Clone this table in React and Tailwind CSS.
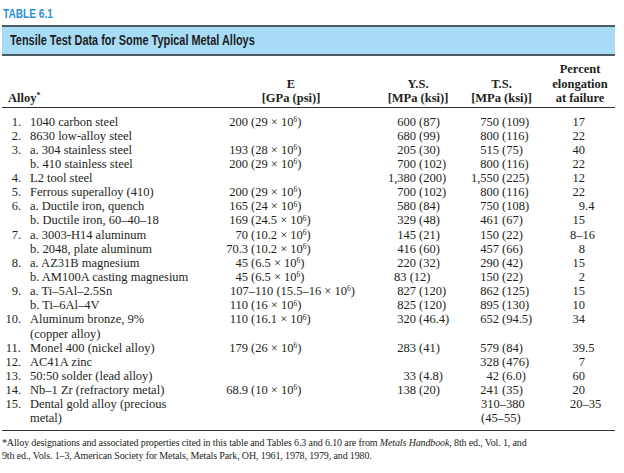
const rows = [
  { n: "1.", a: ["1040 carbon steel"], e: ["200", "(29 × ", "6", ")"], ys: ["600", "(87)"], ts: ["750", "(109)"], p: ["17"] },
  { n: "2.", a: ["8630 low-alloy steel"], ys: ["680", "(99)"], ts: ["800", "(116)"], p: ["22"] },
  { n: "3.", a: ["a. 304 stainless steel"], e: ["193", "(28 × ", "6", ")"], ys: ["205", "(30)"], ts: ["515", "(75)"], p: ["40"] },
  { n: "", a: ["b. 410 stainless steel"], e: ["200", "(29 × ", "6", ")"], ys: ["700", "(102)"], ts: ["800", "(116)"], p: ["22"] },
  { n: "4.", a: ["L2 tool steel"], ys: ["1,380", "(200)"], ts: ["1,550", "(225)"], p: ["12"] },
  { n: "5.", a: ["Ferrous superalloy (410)"], e: ["200", "(29 × ", "6", ")"], ys: ["700", "(102)"], ts: ["800", "(116)"], p: ["22"] },
  { n: "6.", a: ["a. Ductile iron, quench"], e: ["165", "(24 × ", "6", ")"], ys: ["580", "(84)"], ts: ["750", "(108)"], p: ["9", ".4"] },
  { n: "", a: ["b. Ductile iron, 60–40–18"], e: ["169", "(24.5 × ", "6", ")"], ys: ["329", "(48)"], ts: ["461", "(67)"], p: ["15"] },
  { n: "7.", a: ["a. 3003-H14 aluminum"], e: ["70", "(10.2 × ", "6", ")"], ys: ["145", "(21)"], ts: ["150", "(22)"], range: "8–16" },
  { n: "", a: ["b. 2048, plate aluminum"], e: ["70.3", "(10.2 × ", "6", ")"], ys: ["416", "(60)"], ts: ["457", "(66)"], p: ["8"] },
  { n: "8.", a: ["a. AZ31B magnesium"], e: ["45", "(6.5 × ", "6", ")"], ys: ["220", "(32)"], ts: ["290", "(42)"], p: ["15"] },
  { n: "", a: ["b. AM100A casting magnesium"], e: ["45", "(6.5 × ", "6", ")"], ysLeft: "83 (12)", ts: ["150", "(22)"], p: ["2"] },
  { n: "9.", a: ["a. Ti–5Al–2.5Sn"], eLeft: true, e: ["107–110", "(15.5–16 × ", "6", ")"], ys: ["827", "(120)"], ts: ["862", "(125)"], p: ["15"] },
  { n: "", a: ["b. Ti–6Al–4V"], e: ["110", "(16 × ", "6", ")"], ys: ["825", "(120)"], ts: ["895", "(130)"], p: ["10"] },
  { n: "10.", a: ["Aluminum bronze, 9%", "(copper alloy)"], e: ["110", "(16.1 × ", "6", ")"], ys: ["320", "(46.4)"], ts: ["652", "(94.5)"], p: ["34"] },
  { n: "11.", a: ["Monel 400 (nickel alloy)"], e: ["179", "(26 × ", "6", ")"], ys: ["283", "(41)"], ts: ["579", "(84)"], p: ["39", ".5"] },
  { n: "12.", a: ["AC41A zinc"], ts: ["328", "(476)"], p: ["7"] },
  { n: "13.", a: ["50:50 solder (lead alloy)"], ys: ["33", "(4.8)"], ts: ["42", "(6.0)"], p: ["60"] },
  { n: "14.", a: ["Nb–1 Zr (refractory metal)"], e: ["68.9", "(10 × ", "6", ")"], ys: ["138", "(20)"], ts: ["241", "(35)"], p: ["20"] },
  { n: "15.", a: ["Dental gold alloy (precious", "metal)"], tsLines: ["310–380", "(45–55)"], range: "20–35" },
];

function Modulus({ e, left }) {
  if (!e) return null;
  const tail = (
    <>
      {e[1]}10<sup className="text-[7.5px]">{e[2]}</sup>
      {e[3]}
    </>
  );
  if (left) {
    return (
      <span className="pl-[2px] whitespace-nowrap">
        {e[0]} {tail}
      </span>
    );
  }
  return (
    <span className="flex whitespace-nowrap">
      <span className="w-[20px] flex justify-end">{e[0]}</span>
      <span className="pl-[3px]">{tail}</span>
    </span>
  );
}

function Pair({ v, w }) {
  if (!v) return null;
  return (
    <span className="flex whitespace-nowrap">
      <span className={`flex justify-end ${w}`}>{v[0]}</span>
      <span className="pl-[3px]">{v[1]}</span>
    </span>
  );
}

function Row({ r }) {
  return (
    <div className="flex items-start">
      <div className="w-[19px] text-right">{r.n}</div>
      <div className="w-[207px] pl-[9px]">
        {r.a.map((t) => (
          <div key={t}>{t}</div>
        ))}
      </div>
      <div className="w-[160px]">
        <Modulus e={r.e} left={r.eLeft} />
      </div>
      <div className="w-[84px]">
        {r.ysLeft ? (
          <div className="pl-[6px] whitespace-nowrap">{r.ysLeft}</div>
        ) : (
          <Pair v={r.ys} w="w-[28px]" />
        )}
      </div>
      <div className="w-[85px]">
        {r.tsLines ? (
          r.tsLines.map((t) => (
            <div key={t} className="pl-[9px]">
              {t}
            </div>
          ))
        ) : (
          <Pair v={r.ts} w="w-[27px]" />
        )}
      </div>
      <div className="flex-1">
        {r.range ? (
          <span className="pl-[13px]">{r.range}</span>
        ) : (
          <span className="flex">
            <span className="w-[28px] text-right">{r.p[0]}</span>
            <span>{r.p[1]}</span>
          </span>
        )}
      </div>
    </div>
  );
}

export default function App() {
  const serif = "font-['Liberation_Serif','Times_New_Roman',serif]";
  const sans = "font-['Liberation_Sans',Arial,sans-serif]";
  return (
    <div className="w-[624px] h-[473px] bg-white text-[#231f20] overflow-hidden">
      <div className="ml-[2px] w-[613px]">
        <div className="pt-[5px] pl-[1px] leading-[15px]">
          <span className={`${sans} inline-block origin-left scale-x-[0.81] text-[12.5px] font-bold text-[#2a8fd6] whitespace-nowrap`}>
            TABLE 6.1
          </span>
        </div>
        <div className="mt-[3px] h-[31px] border-y-2 border-[#4b5a66] bg-[#a8dcf6] flex items-center pl-[8px]">
          <span className={`${sans} inline-block origin-left scale-x-[0.78] text-[14px] font-bold text-[#1d1d1d] whitespace-nowrap`}>
            Tensile Test Data for Some Typical Metal Alloys
          </span>
        </div>

        <div className={`${serif} text-[12.5px]`}>
          <div className="flex items-end pt-[6px] pb-[1px] leading-[14.5px] font-bold border-b border-[#333]">
            <div className="w-[250px] pl-[6px]">
              Alloy<sup className="text-[8px]">*</sup>
            </div>
            <div className="w-[78px] text-center">
              E<br />[GPa (psi)]
            </div>
            <div className="ml-[50px] w-[76px] text-center">
              Y.S.<br />[MPa (ksi)]
            </div>
            <div className="ml-[7px] w-[77px] text-center">
              T.S.<br />[MPa (ksi)]
            </div>
            <div className="ml-[8px] w-[64px] text-center">
              Percent<br />elongation<br />at failure
            </div>
          </div>

          <div className="pt-[7px] pb-[4px] leading-[14.14px] border-b border-[#333]">
            {rows.map((r, i) => (
              <Row key={i} r={r} />
            ))}
          </div>

          <div className="pt-[5px] text-[10px] tracking-[-0.13px] leading-[13px] whitespace-nowrap">
            *Alloy designations and associated properties cited in this table and Tables 6.3 and 6.10 are from{" "}
            <i>Metals Handbook</i>, 8th ed., Vol. 1, and
            <br />
            9th ed., Vols. 1–3, American Society for Metals, Metals Park, OH, 1961, 1978, 1979, and 1980.
          </div>
        </div>
      </div>
    </div>
  );
}
